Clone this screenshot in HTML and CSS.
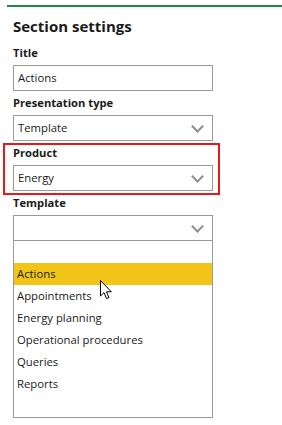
FILE: index.html
```html
<!DOCTYPE html>
<html lang="en">

<head>
    <meta charset="UTF-8" />
    <meta name="viewport" content="width=device-width, initial-scale=1" />
    <title>Section settings</title>
    <link rel="stylesheet" href="styles.css">
</head>

<body>
    <div class="panel">
        <h2 class="panel-title">Section settings</h2>

        <div class="field">
            <label class="field-label">Title</label>
            <div class="box">Actions</div>
        </div>

        <div class="field">
            <label class="field-label">Presentation type</label>
            <div class="box select">Template</div>
        </div>

        <div class="field highlighted">
            <label class="field-label">Product</label>
            <div class="box select">Energy</div>
        </div>

        <div class="field">
            <label class="field-label">Template</label>
            <div class="box select"></div>
            <ul class="dropdown">
                <li class="option"></li>
                <li class="option active">Actions</li>
                <li class="option">Appointments</li>
                <li class="option">Energy planning</li>
                <li class="option">Operational procedures</li>
                <li class="option">Queries</li>
                <li class="option">Reports</li>
                <li class="option"></li>
            </ul>
            <svg class="cursor" width="13" height="20" viewBox="0 0 13 20">
                <path d="M0.5 0.5 L0.5 16 L4 12.6 L6.6 18.6 L9 17.6 L6.4 11.8 L11.3 11.8 Z" fill="#fff" stroke="#000" stroke-width="1" stroke-linejoin="miter" />
            </svg>
        </div>
    </div>
</body>

</html>
```

FILE: styles.css
```css
body {
    margin: 0;
    font-family: "Open Sans", "Noto Sans", Arial, sans-serif;
    color: #1a1a1a;
    background: #fff;
}

.panel {
    margin: 5px 0 0 7px;
    border-top: 2px solid #1e8a46;
    padding: 0 0 0 6px;
}

.panel-title {
    margin: 0;
    padding-top: 8px;
    height: 26px;
    font-size: 15px;
    font-weight: 700;
    line-height: 22px;
}

.field {
    position: relative;
    width: 200px;
}

.field-label {
    display: block;
    height: 24px;
    font-size: 11.2px;
    font-weight: 700;
    line-height: 24px;
}

.box {
    position: relative;
    box-sizing: border-box;
    height: 26px;
    border: 1px solid #9a9a9a;
    padding: 0 4px;
    font-size: 11.3px;
    line-height: 24px;
}

.select::after {
    content: "";
    position: absolute;
    right: 10px;
    top: 6px;
    width: 7px;
    height: 7px;
    border-right: 2px solid #8c8c8c;
    border-bottom: 2px solid #8c8c8c;
    transform: rotate(45deg);
}

.highlighted::before {
    content: "";
    position: absolute;
    left: -10px;
    right: -7px;
    top: 2px;
    bottom: -4px;
    border: 2px solid #e8191a;
}

.dropdown {
    list-style: none;
    margin: -1px 0 0;
    padding: 0;
    border: 1px solid #9a9a9a;
}

.option {
    height: 22px;
    padding: 0 3px;
    font-size: 11.3px;
    line-height: 22px;
}

.option.active {
    background-color: #f2c418;
}

.cursor {
    position: absolute;
    left: 87px;
    top: 89px;
}
```
